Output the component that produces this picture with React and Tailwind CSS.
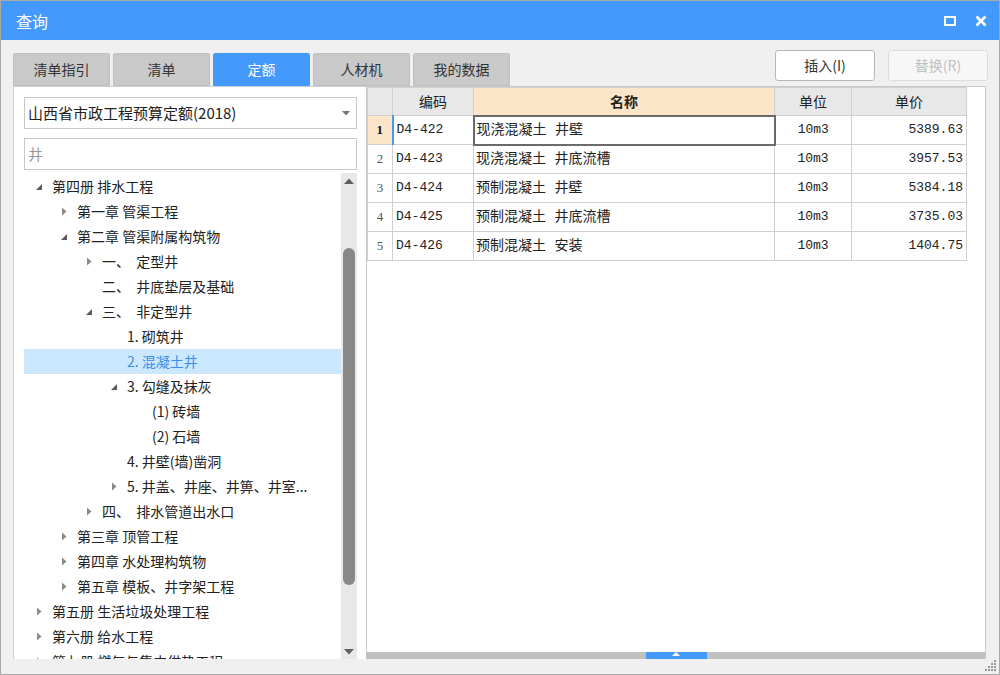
import React from "react";

const sans = { fontFamily: '"Noto Sans CJK SC", "Noto Sans", sans-serif' };
const mono = { fontFamily: '"Liberation Mono", "Noto Sans CJK SC", monospace' };

const tabs = ["清单指引", "清单", "定额", "人材机", "我的数据"];

// level, state: "open" | "closed" | null
const tree = [
  [0, "open", "第四册 排水工程"],
  [1, "closed", "第一章 管渠工程"],
  [1, "open", "第二章 管渠附属构筑物"],
  [2, "closed", "一、  定型井"],
  [2, null, "二、  井底垫层及基础"],
  [2, "open", "三、  非定型井"],
  [3, null, "1. 砌筑井"],
  [3, null, "2. 混凝土井", true],
  [3, "open", "3. 勾缝及抹灰"],
  [4, null, "(1) 砖墙"],
  [4, null, "(2) 石墙"],
  [3, null, "4. 井壁(墙)凿洞"],
  [3, "closed", "5. 井盖、井座、井箅、井室..."],
  [2, "closed", "四、  排水管道出水口"],
  [1, "closed", "第三章 顶管工程"],
  [1, "closed", "第四章 水处理构筑物"],
  [1, "closed", "第五章 模板、井字架工程"],
  [0, "closed", "第五册 生活垃圾处理工程"],
  [0, "closed", "第六册 给水工程"],
  [0, "closed", "第七册 燃气与集中供热工程"],
];

const rows = [
  ["D4-422", "现浇混凝土 井壁", "10m3", "5389.63"],
  ["D4-423", "现浇混凝土 井底流槽", "10m3", "3957.53"],
  ["D4-424", "预制混凝土 井壁", "10m3", "5384.18"],
  ["D4-425", "预制混凝土 井底流槽", "10m3", "3735.03"],
  ["D4-426", "预制混凝土 安装", "10m3", "1404.75"],
];

const indents = ["pl-0", "pl-[25px]", "pl-[50px]", "pl-[75px]", "pl-[100px]"];

function Arrow({ state }) {
  if (state === "open")
    return (
      <svg width="8" height="8" viewBox="0 0 8 8">
        <path d="M7 1 L7 7 L1 7 Z" fill="#595959" />
      </svg>
    );
  if (state === "closed")
    return (
      <svg width="6" height="9" viewBox="0 0 6 9">
        <path d="M1 0.5 L5.5 4.5 L1 8.5 Z" fill="#8a8a8a" />
      </svg>
    );
  return null;
}

function TreeRow({ level, state, label, selected }) {
  return (
    <div
      className={`h-[25px] flex items-center whitespace-pre ${indents[level]} ${
        selected ? "bg-[#cce8ff] text-[#3b8fe8]" : "text-[#222]"
      }`}
    >
      <span className="w-[28px] flex justify-center pl-[1px]">
        <Arrow state={state} />
      </span>
      <span>{label}</span>
    </div>
  );
}

export default function App() {
  return (
    <div
      className="w-[1000px] h-[675px] bg-[#f0f0f0] border border-[#a9a9a9] flex flex-col overflow-hidden text-[14px]"
      style={sans}
    >
      {/* title bar */}
      <div className="h-[39px] bg-[#4499fc] flex items-center pl-[15px] pr-[12px] text-white shrink-0">
        <span className="text-[16px]">查询</span>
        <div className="ml-auto flex items-center gap-[19px]">
          <span className="w-[12px] h-[10px] border-[2.5px] border-white" />
          <svg width="12" height="12" viewBox="0 0 12 12">
            <path d="M1.5 1.5 L10.5 10.5 M10.5 1.5 L1.5 10.5" stroke="white" strokeWidth="2.6" />
          </svg>
        </div>
      </div>

      {/* tabs + buttons */}
      <div className="mt-[10px] h-[36px] flex items-end pl-[12px] pr-[11px] shrink-0">
        <div className="flex gap-[3px]">
          {tabs.map((t) => (
            <div
              key={t}
              className={`w-[97px] h-[33px] flex items-center justify-center rounded-t-[2px] border ${
                t === "定额"
                  ? "bg-[#4499fc] border-[#4499fc] text-white"
                  : "bg-[#c9c9c9] border-[#c0c0c0] text-[#333]"
              }`}
            >
              {t}
            </div>
          ))}
        </div>
        <div className="ml-auto self-start flex gap-[13px]">
          <button className="w-[100px] h-[31px] bg-white border border-[#b8b8b8] rounded-[3px] text-[#333]">
            插入(I)
          </button>
          <button className="w-[100px] h-[31px] bg-[#f7f7f7] border border-[#dcdcdc] rounded-[3px] text-[#c0c0c0]">
            替换(R)
          </button>
        </div>
      </div>

      {/* content */}
      <div className="ml-[12px] w-[975px] h-[573px] flex shrink-0">
        {/* left panel */}
        <div className="w-[353px] bg-white border-l border-t border-[#cfcfcf] flex flex-col">
          <div className="mt-[10px] ml-[10px] w-[333px] h-[32px] border border-[#c8c8c8] flex items-center pl-[3px] pr-[6px] text-[#222]">
            <span className="text-[15px]">山西省市政工程预算定额(2018)</span>
            <svg className="ml-auto" width="8" height="5" viewBox="0 0 8 5">
              <path d="M0 0 L8 0 L4 4.5 Z" fill="#777" />
            </svg>
          </div>
          <div className="mt-[9px] ml-[10px] w-[333px] h-[32px] border border-[#c8c8c8] flex items-center pl-[3px] text-[#999] text-[15px]">
            井
          </div>
          <div className="mt-[3px] flex flex-1 min-h-0 pl-[10px]">
            <div className="w-[317px] pt-[1px] overflow-hidden">
              {tree.map(([lv, st, label, sel], i) => (
                <TreeRow key={i} level={lv} state={st} label={label} selected={sel} />
              ))}
            </div>
            <div className="w-[16px] bg-[#e8e8e8] flex flex-col items-center">
              <svg className="mt-[5px]" width="10" height="6" viewBox="0 0 10 6">
                <path d="M0 6 L5 0.5 L10 6 Z" fill="#5f5f5f" />
              </svg>
              <div className="mt-[64px] w-[12px] h-[337px] bg-[#888] rounded-full" />
              <svg className="mt-auto mb-[4px]" width="10" height="6" viewBox="0 0 10 6">
                <path d="M0 0 L10 0 L5 5.5 Z" fill="#5f5f5f" />
              </svg>
            </div>
          </div>
        </div>

        {/* right panel */}
        <div className="w-[620px] bg-white border-l border-t border-r border-[#c8c8c8] flex flex-col">
          <div className="flex-1 min-h-0">
            <table className="border-collapse table-fixed text-[#222]">
              <colgroup>
                <col className="w-[25px]" />
                <col className="w-[81px]" />
                <col className="w-[301px]" />
                <col className="w-[77px]" />
                <col className="w-[115px]" />
              </colgroup>
              <thead>
                <tr className="h-[28px]">
                  <th className="bg-[#e8e8e8] border border-[#d0d0d0]" />
                  <th className="bg-[#e8e8e8] border border-[#d0d0d0] font-normal">编码</th>
                  <th className="bg-[#fde5c9] border border-[#d0d0d0] font-bold">名称</th>
                  <th className="bg-[#e8e8e8] border border-[#d0d0d0] font-normal">单位</th>
                  <th className="bg-[#e8e8e8] border border-[#d0d0d0] font-normal">单价</th>
                </tr>
              </thead>
              <tbody>
                {rows.map((r, i) => (
                  <tr key={r[0]} className="h-[29px]">
                    <td
                      className={`border border-[#d0d0d0] text-center text-[13px] ${
                        i === 0 ? "bg-[#fde5c9] font-bold text-[#111]" : "text-[#555]"
                      }`}
                      style={{ fontFamily: '"Liberation Serif", serif' }}
                    >
                      {i + 1}
                    </td>
                    <td
                      className={`border border-[#d0d0d0] pl-[3px] text-[13px] ${
                        i === 0 ? "border-l-[#4499fc] border-l-2" : ""
                      }`}
                      style={mono}
                    >
                      {r[0]}
                    </td>
                    <td
                      className={`pl-[2px] text-[14px] whitespace-pre ${
                        i === 0 ? "border-2 border-[#6a6a6a]" : "border border-[#d0d0d0]"
                      }`}
                      style={mono}
                    >
                      {r[1]}
                    </td>
                    <td className="border border-[#d0d0d0] text-center text-[13px]" style={mono}>
                      {r[2]}
                    </td>
                    <td className="border border-[#d0d0d0] text-right pr-[3px] text-[13px]" style={mono}>
                      {r[3]}
                    </td>
                  </tr>
                ))}
              </tbody>
            </table>
          </div>
          <div className="h-[7px] bg-[#c0c0c0] flex justify-center">
            <div className="w-[61px] h-[7px] bg-[#4499fc] flex items-start justify-center">
              <svg width="8" height="4" viewBox="0 0 8 4">
                <path d="M0 4 L4 0 L8 4 Z" fill="white" />
              </svg>
            </div>
          </div>
        </div>
      </div>

      {/* bottom strip with grip */}
      <div className="flex-1 flex justify-end items-end pr-[2px] pb-[2px]">
        <svg width="12" height="12" viewBox="0 0 12 12">
          <g fill="#9a9a9a">
            <rect x="9" y="0" width="2" height="2" />
            <rect x="6" y="3" width="2" height="2" />
            <rect x="9" y="3" width="2" height="2" />
            <rect x="3" y="6" width="2" height="2" />
            <rect x="6" y="6" width="2" height="2" />
            <rect x="9" y="6" width="2" height="2" />
            <rect x="0" y="9" width="2" height="2" />
            <rect x="3" y="9" width="2" height="2" />
            <rect x="6" y="9" width="2" height="2" />
            <rect x="9" y="9" width="2" height="2" />
          </g>
        </svg>
      </div>
    </div>
  );
}
